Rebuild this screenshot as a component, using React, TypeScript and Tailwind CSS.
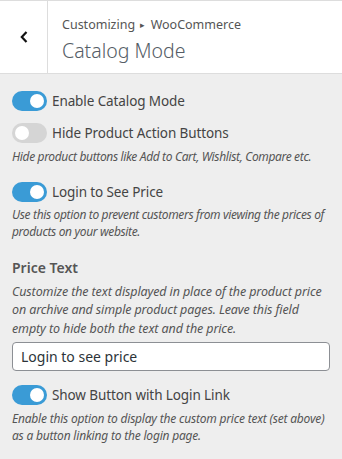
import React from 'react';

function Toggle({ on }: { on: boolean }) {
  return (
    <span
      className={
        on
          ? 'relative inline-flex h-5 w-[35px] shrink-0 items-center rounded-full bg-[#3a9bd6]'
          : 'relative inline-flex h-5 w-[35px] shrink-0 items-center rounded-full bg-[#d5d5d5]'
      }
    >
      <span
        className={
          on
            ? 'absolute right-[3px] h-[14px] w-[14px] rounded-full bg-white'
            : 'absolute left-[3px] h-[14px] w-[14px] rounded-full bg-white'
        }
      />
    </span>
  );
}

function ToggleRow({ on, label }: { on: boolean; label: string }) {
  return (
    <div className="flex items-center gap-[5px]">
      <Toggle on={on} />
      <span className="text-[13.5px] tracking-[-0.1px] text-[#444]">{label}</span>
    </div>
  );
}

function Desc({ children, loose }: { children: React.ReactNode; loose?: boolean }) {
  return (
    <p
      className={
        loose
          ? 'text-[12px] italic leading-[17px] tracking-[-0.2px] text-[#555]'
          : 'text-[12px] italic leading-[17px] tracking-[-0.35px] text-[#555]'
      }
    >
      {children}
    </p>
  );
}

export default function App() {
  return (
    <div className="h-[459px] w-[342px] overflow-hidden bg-[#eeeeee]" style={{ fontFamily: '"Noto Sans", "Open Sans", sans-serif' }}>
      <div className="flex h-[74px] border-y border-[#ddd] bg-white">
        <button className="flex w-[48px] shrink-0 items-center justify-center border-r border-[#ddd]">
          <svg width="10" height="14" viewBox="0 0 10 14">
            <path d="M7.5 2 L2.8 7 L7.5 12" fill="none" stroke="#111" strokeWidth="2.2" />
          </svg>
        </button>
        <div className="flex flex-col justify-center pl-[14px] pt-[4px]">
          <div className="text-[12.5px] leading-[18px] text-[#555]">
            Customizing <span className="mx-[2px] text-[9px] align-[1px]">▸</span> WooCommerce
          </div>
          <div className="mt-[5px] text-[19.5px] font-light leading-[24px] text-[#555d66]">Catalog Mode</div>
        </div>
      </div>

      <div className="px-3 pt-[17px]">
        <ToggleRow on label="Enable Catalog Mode" />
        <div className="mt-[12px]">
          <ToggleRow on={false} label="Hide Product Action Buttons" />
        </div>
        <div className="mt-[4px]">
          <Desc>Hide product buttons like Add to Cart, Wishlist, Compare etc.</Desc>
        </div>

        <div className="mt-[17px]">
          <ToggleRow on label="Login to See Price" />
        </div>
        <div className="mt-[4px]">
          <Desc>Use this option to prevent customers from viewing the prices of products on your website.</Desc>
        </div>

        <div className="mt-[17px] text-[14px] font-semibold text-[#555]">Price Text</div>
        <div className="mt-[5px]">
          <p className="text-[12.5px] italic leading-[18.5px] tracking-[-0.12px] text-[#555]">
            Customize the text displayed in place of the product price on archive and simple product pages. Leave this field empty to hide both the text and the price.
          </p>
        </div>
        <input
          readOnly
          value="Login to see price"
          className="mt-[4px] h-[29px] w-full rounded-[4px] border border-[#8c8f94] bg-white px-2 text-[14px] text-[#2c3338] outline-none"
        />

        <div className="mt-[14px]">
          <ToggleRow on label="Show Button with Login Link" />
        </div>
        <div className="mt-[4px]">
          <Desc loose>Enable this option to display the custom price text (set above) as a button linking to the login page.</Desc>
        </div>
      </div>
    </div>
  );
}
